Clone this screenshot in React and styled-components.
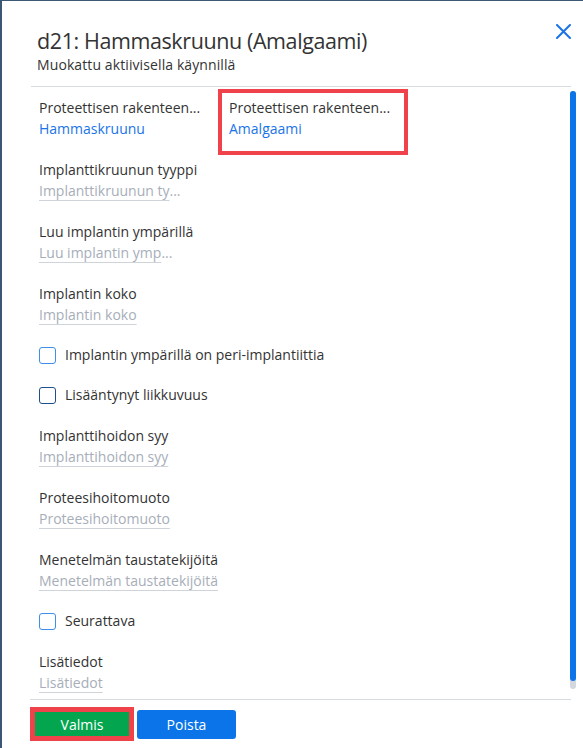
import React from "react";
import styled, { createGlobalStyle } from "styled-components";

const GlobalStyle = createGlobalStyle`
  html, body {
    margin: 0;
    padding: 0;
    background: #ffffff;
  }
  body {
    font-family: "Open Sans", "Noto Sans", sans-serif;
    color: #333333;
  }
`;

const rows = [
  { type: "pair" },
  { type: "field", label: "Implanttikruunun tyyppi", placeholder: "Implanttikruunun ty", cut: true },
  { type: "field", label: "Luu implantin ympärillä", placeholder: "Luu implantin ymp", cut: true },
  { type: "field", label: "Implantin koko", placeholder: "Implantin koko" },
  { type: "check", label: "Implantin ympärillä on peri-implantiittia" },
  { type: "check", label: "Lisääntynyt liikkuvuus", focused: true },
  { type: "field", label: "Implanttihoidon syy", placeholder: "Implanttihoidon syy" },
  { type: "field", label: "Proteesihoitomuoto", placeholder: "Proteesihoitomuoto" },
  { type: "field", label: "Menetelmän taustatekijöitä", placeholder: "Menetelmän taustatekijöitä" },
  { type: "check", label: "Seurattava" },
  { type: "field", label: "Lisätiedot", placeholder: "Lisätiedot" },
];

const CloseIcon = () => (
  <svg width="15" height="15" viewBox="0 0 15 15">
    <path d="M1 1 L14 14 M14 1 L1 14" stroke="#1a74e8" strokeWidth="2" strokeLinecap="round" />
  </svg>
);

const Field = ({ label, value, placeholder, cut, highlighted }) => (
  <FieldBox $highlighted={highlighted}>
    <Label>{label}</Label>
    {value ? (
      <Value>{value}</Value>
    ) : (
      <Placeholder>
        <Underlined>{placeholder}</Underlined>
        {cut && "..."}
      </Placeholder>
    )}
  </FieldBox>
);

const Check = ({ label, focused }) => (
  <CheckRow>
    <Box $focused={focused} />
    <CheckText>{label}</CheckText>
  </CheckRow>
);

export default function App() {
  return (
    <>
      <GlobalStyle />
      <Dialog>
        <Header>
          <TitleBlock>
            <Title>d21: Hammaskruunu (Amalgaami)</Title>
            <Subtitle>Muokattu aktiivisella käynnillä</Subtitle>
          </TitleBlock>
          <CloseButton aria-label="Sulje">
            <CloseIcon />
          </CloseButton>
        </Header>
        <Body>
          <Content>
            {rows.map((row, i) => {
              if (row.type === "pair") {
                return (
                  <Pair key={i}>
                    <Field label="Proteettisen rakenteen..." value="Hammaskruunu" />
                    <Field label="Proteettisen rakenteen..." value="Amalgaami" highlighted />
                  </Pair>
                );
              }
              if (row.type === "check") {
                return <Check key={i} label={row.label} focused={row.focused} />;
              }
              return (
                <Field key={i} label={row.label} placeholder={row.placeholder} cut={row.cut} />
              );
            })}
          </Content>
          <Rail>
            <Thumb />
          </Rail>
        </Body>
        <Footer>
          <Button $variant="done" $highlighted>Valmis</Button>
          <Button $variant="delete">Poista</Button>
        </Footer>
      </Dialog>
    </>
  );
}

const Dialog = styled.div`
  box-sizing: border-box;
  height: 748px;
  display: flex;
  flex-direction: column;
  border-left: 2px solid #3b5773;
  border-top: 1px solid #3b5773;
  background: #ffffff;
  overflow: hidden;
`;

const Header = styled.div`
  display: flex;
  align-items: flex-start;
  justify-content: space-between;
  margin: 0 12px 0 29px;
  padding: 25px 0 12px 6px;
  border-bottom: 1px solid #d6dce2;
`;

const TitleBlock = styled.div`
  display: flex;
  flex-direction: column;
`;

const Title = styled.h1`
  margin: 0;
  font-size: 21.5px;
  font-weight: 400;
  letter-spacing: -0.4px;
  line-height: 30px;
  color: #333333;
`;

const Subtitle = styled.div`
  font-size: 14px;
  letter-spacing: 0.1px;
  line-height: 18px;
  color: #333333;
`;

const CloseButton = styled.button`
  border: none;
  background: none;
  padding: 0;
  margin-top: -2px;
  cursor: pointer;
  display: flex;
`;

const Body = styled.div`
  flex: 1;
  min-height: 0;
  display: flex;
  margin: 0 7px 0 29px;
`;

const Content = styled.div`
  flex: 1;
  display: flex;
  flex-direction: column;
  gap: 20px;
  padding: 10px 0 0 8px;
`;

const Pair = styled.div`
  display: grid;
  grid-template-columns: 170px 168px;
  column-gap: 20px;
`;

const FieldBox = styled.div`
  display: flex;
  flex-direction: column;
  min-width: 0;
  ${({ $highlighted }) =>
    $highlighted &&
    `
    margin: -8px -11px -16px;
    padding: 4px 7px 12px;
    border: 4px solid #f0424a;
  `}
`;

const Label = styled.div`
  font-size: 14px;
  line-height: 21px;
  color: #333333;
  white-space: nowrap;
`;

const Value = styled.div`
  font-size: 14px;
  line-height: 21px;
  color: #1a74e8;
`;

const Placeholder = styled.div`
  font-size: 14px;
  line-height: 21px;
  color: #a7aeb9;
  white-space: nowrap;
`;

const Underlined = styled.span`
  text-decoration: underline;
  text-decoration-color: #cfd4da;
  text-underline-offset: 4px;
`;

const CheckRow = styled.label`
  display: flex;
  align-items: center;
  gap: 9px;
  height: 20px;
`;

const Box = styled.span`
  box-sizing: border-box;
  width: 17px;
  height: 17px;
  border-radius: 3px;
  border: 1.5px solid ${({ $focused }) => ($focused ? "#1e4f8c" : "#3d8fe8")};
  background: #ffffff;
`;

const CheckText = styled.span`
  font-size: 14px;
  line-height: 20px;
  color: #333333;
`;

const Rail = styled.div`
  width: 6px;
  margin: 4px 0 10px 4px;
  border-radius: 3px;
  background: #d3d8de;
  display: flex;
  flex-direction: column;
`;

const Thumb = styled.div`
  flex: 0 0 590px;
  border-radius: 3px;
  background: #0b74e8;
`;

const Footer = styled.div`
  height: 48px;
  display: flex;
  align-items: center;
  gap: 3px;
  margin: 0 12px 0 28px;
  border-top: 1px solid #d6dce2;
`;

const Button = styled.button`
  box-sizing: border-box;
  border: none;
  border-radius: 3px;
  font-family: "Open Sans", "Noto Sans", sans-serif;
  font-size: 14px;
  color: #ffffff;
  cursor: pointer;
  width: 99px;
  height: 29px;
  background: ${({ $variant }) => ($variant === "done" ? "#03a64f" : "#0b74e8")};
  ${({ $highlighted }) =>
    $highlighted &&
    `
    width: 104px;
    height: 34px;
    border-radius: 0;
    border: 5px solid #f0424a;
  `}
`;
